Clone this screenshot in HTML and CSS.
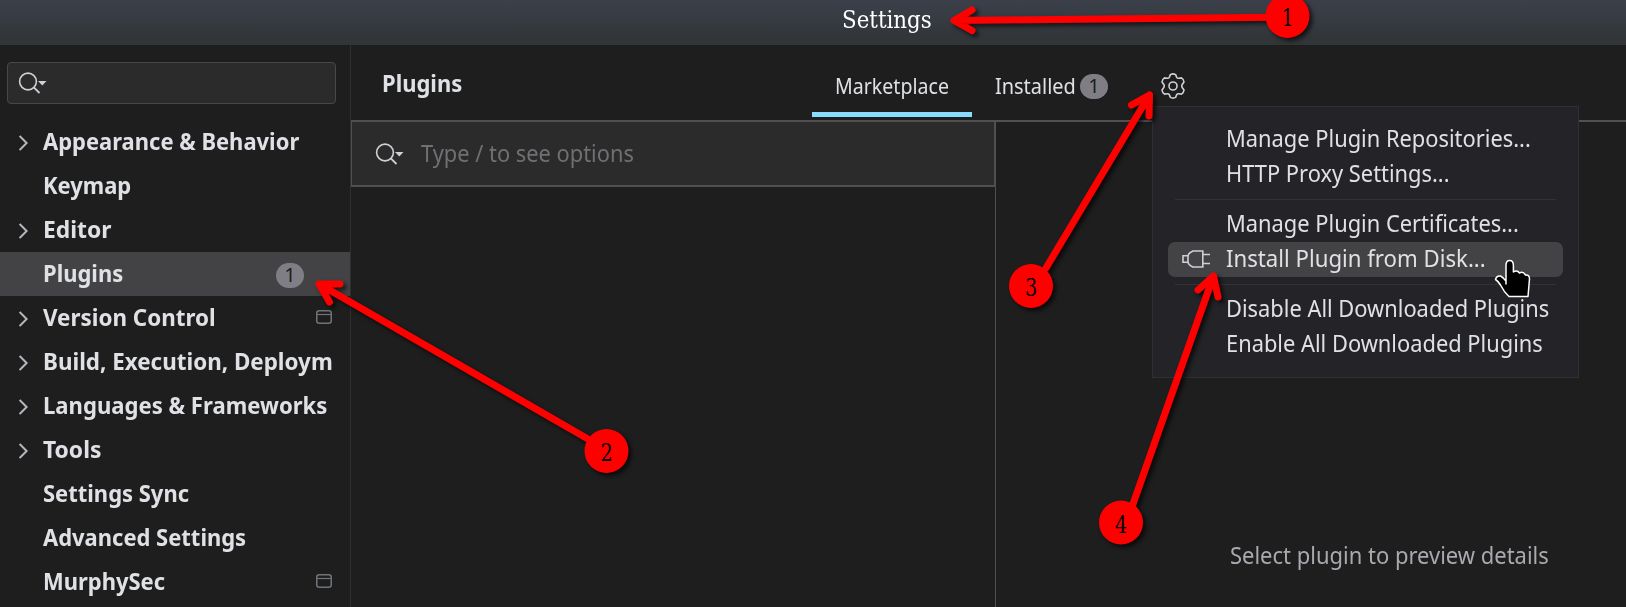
FILE: index.html
```
<!DOCTYPE html>
<html lang="en">
<head>
<meta charset="utf-8">
<title>Settings</title>
<link rel="stylesheet" href="styles.css">
</head>
<body>
<svg class="defs" width="0" height="0">
  <symbol id="search" viewBox="0 0 30 24"><circle cx="10" cy="10.5" r="8.4" fill="none" stroke="#ced0d6" stroke-width="1.6"/><path d="M15.8 16.3 21.5 22" fill="none" stroke="#ced0d6" stroke-width="1.8"/><path d="M20 10h8.5l-4.2 4.6z" fill="#ced0d6"/></symbol>
  <symbol id="chevron" viewBox="0 0 10 16"><path d="M.6 1l7 7-7 7" fill="none" stroke="#b4b8bf" stroke-width="2"/></symbol>
  <symbol id="project" viewBox="0 0 16 14"><rect x=".75" y=".75" width="14.5" height="12.5" rx="2.4" fill="none" stroke="#6f737a" stroke-width="1.5"/><path d="M1 4.5h14" stroke="#6f737a" stroke-width="1.2"/></symbol>
</svg>
<header class="titlebar"><span>Settings</span></header>
<div class="window">
  <aside class="sidebar">
    <div class="filter"><svg class="search-icon"><use href="#search"/></svg></div>
    <nav class="tree">
      <div class="node"><svg class="chevron"><use href="#chevron"/></svg><span class="label">Appearance &amp; Behavior</span></div>
      <div class="node"><span class="label">Keymap</span></div>
      <div class="node"><svg class="chevron"><use href="#chevron"/></svg><span class="label full">Editor</span></div>
      <div class="node selected"><span class="label">Plugins</span><span class="badge">1</span></div>
      <div class="node"><svg class="chevron"><use href="#chevron"/></svg><span class="label wide">Version Control</span><svg class="project"><use href="#project"/></svg></div>
      <div class="node"><svg class="chevron"><use href="#chevron"/></svg><span class="label wide">Build, Execution, Deploym</span></div>
      <div class="node"><svg class="chevron"><use href="#chevron"/></svg><span class="label medium">Languages &amp; Frameworks</span></div>
      <div class="node"><svg class="chevron"><use href="#chevron"/></svg><span class="label full">Tools</span></div>
      <div class="node"><span class="label">Settings Sync</span></div>
      <div class="node"><span class="label">Advanced Settings</span></div>
      <div class="node"><span class="label">MurphySec</span><svg class="project"><use href="#project"/></svg></div>
    </nav>
  </aside>
  <main class="content">
    <div class="toolbar">
      <h1 class="heading"><span>Plugins</span></h1>
      <div class="tab active"><span class="name">Marketplace</span></div>
      <div class="tab installed"><span class="name">Installed</span><span class="badge">1</span></div>
      <svg class="gear" viewBox="-12 -13 24 26"><path d="M-2.6 -11.4Q0 -12.8 2.6 -11.4L3.7 -8.6Q4.3 -7.6 5.5 -7.7L8.5 -8.1Q10.8 -6.6 11 -4L9.2 -1.5Q8.4 0 9.2 1.5L11 4Q10.8 6.6 8.5 8.1L5.5 7.7Q4.3 7.6 3.7 8.6L2.6 11.4Q0 12.8 -2.6 11.4L-3.7 8.6Q-4.3 7.6 -5.5 7.7L-8.5 8.1Q-10.8 6.6 -11 4L-9.2 1.5Q-8.4 0 -9.2 -1.5L-11 -4Q-10.8 -6.6 -8.5 -8.1L-5.5 -7.7Q-4.3 -7.6 -3.7 -8.6Z"/><circle r="4"/></svg>
    </div>
    <div class="panes">
      <section class="list"><div class="query"><svg class="search-icon"><use href="#search"/></svg><span class="placeholder">Type / to see options</span></div></section>
      <section class="details"><span class="hint">Select plugin to preview details</span></section>
    </div>
  </main>
</div>
<div class="menu">
  <div class="item"><span>Manage Plugin Repositories...</span></div>
  <div class="item"><span>HTTP Proxy Settings...</span></div>
  <div class="separator"></div>
  <div class="item"><span>Manage Plugin Certificates...</span></div>
  <div class="item hover"><svg class="plug" viewBox="0 0 28 18"><path d="M6 5.7H1v6.6h5M11 1h9.8v16H11Q6 15 6 11.5v-5Q6 3 11 1zM20.8 4.5H28M20.8 13.5H28"/></svg><span>Install Plugin from Disk...</span></div>
  <div class="separator"></div>
  <div class="item"><span>Disable All Downloaded Plugins</span></div>
  <div class="item"><span>Enable All Downloaded Plugins</span></div>
</div>
<svg class="annotations" viewBox="0 0 1626 607">
  <path class="pointer" d="M1506 284V265.500Q1506 260.500 1509.700 260.500T1513.400 265.500V272Q1517 269.500 1519.500 273Q1523 271 1525.500 275Q1529.500 274.500 1529.500 279L1528 296.500H1509Q1504 292 1500.500 285Q1498 281 1495.500 279.500Q1496.500 275.500 1500.500 276Q1503.500 277.500 1506 281z"/>
  <g class="callout"><path d="M1287 17.200 954 20.500M972 10 954 20.500 972 30.500"/><circle cx="1287.500" cy="16" r="22"/></g>
  <g class="callout"><path d="M588 439 319 284M340 284H319L329.500 302"/><circle cx="606.500" cy="451" r="22"/></g>
  <g class="callout"><path d="M1046 268 1149.500 95M1131.500 105 1149.500 95 1149 116"/><circle cx="1031" cy="286" r="22"/></g>
  <g class="callout"><path d="M1133 504 1213.500 276M1198 290 1213.500 276 1218 297"/><circle cx="1121" cy="522.500" r="22"/></g>
  <text transform="translate(1287.500 26) scale(.8 1)">1</text>
  <text transform="translate(606.500 461) scale(.8 1)">2</text>
  <text transform="translate(1031 296) scale(.8 1)">3</text>
  <text transform="translate(1121 533) scale(.8 1)">4</text>
</svg>
</body>
</html>
```
FILE: styles.css
```
* { box-sizing: border-box; }
body { margin: 0; width: 1626px; height: 607px; overflow: hidden; position: relative; background: #1e1e1e; color: #dfe1e5; font: 23px "Noto Sans", sans-serif; white-space: nowrap; }
.defs { position: absolute; }
.titlebar { height: 45px; padding: 0 0 6px 842px; display: flex; align-items: center; background: linear-gradient(#3a3f49, #383d45 30%, #323639 80%, #303538); color: #fff; font: 23.500px "DejaVu Serif", serif; }
.titlebar span { transform: scaleX(.91); transform-origin: left; }
.window { display: flex; height: 562px; }
.sidebar { width: 351px; flex: none; border-right: 1px solid #2f2f30; padding-top: 17px; }
.filter { width: 329px; height: 42px; margin-left: 6.500px; border: 1px solid #48484a; border-radius: 4px; background: #2b2b2b; padding: 8px 0 0 10px; }
.search-icon { width: 30px; height: 24px; display: block; flex: none; }
.tree { padding-top: 16px; }
.node { height: 44px; display: flex; align-items: center; padding: 0 18px 0 43px; position: relative; font-weight: 700; }
.label { line-height: 30px; margin: -3px auto 0 0; transform: scaleX(.955); transform-origin: left; }
.label.medium { transform: scaleX(.961); }
.label.wide { transform: scaleX(.974); }
.label.full { transform: scaleX(.993); }
.selected { background: #434345; }
.chevron { position: absolute; left: 19px; top: 15px; width: 10px; height: 16px; }
.project { width: 16px; height: 14px; margin-top: -2px; }
.badge { width: 28px; height: 25px; border-radius: 12.5px; background: #7f7e84; color: #1e1e1e; font-size: 20px; font-weight: 400; line-height: 24px; text-align: center; flex: none; }
.node .badge { margin: 3px 28px 0 0; }
.content { flex: 1; }
.toolbar { height: 75px; display: flex; padding-left: 31px; }
.heading { margin: 0; width: 430px; font-size: 23px; line-height: 30px; padding-top: 23px; }
.heading span { display: inline-block; transform: scaleX(.955); transform-origin: left; }
.tab { height: 72px; padding-top: 25px; line-height: 30px; display: flex; font-size: 22px; }
.name { transform: scaleX(.89); }
.active { width: 160px; justify-content: center; border-bottom: 5px solid #87dcff; }
.installed { margin-left: 23px; width: 113px; }
.installed .name { width: 85px; flex: none; transform: scaleX(.906); transform-origin: left; }
.installed .badge { margin-top: 4px; }
.gear { width: 24px; height: 26px; margin: 28px 0 0 53px; fill: none; stroke: #ced0d6; stroke-width: 1.6; }
.panes { display: flex; height: 487px; border-top: 2px solid #505050; }
.list { width: 645px; border-right: 1px solid #505050; }
.query { height: 65px; display: flex; align-items: center; background: #2b2b2b; border: solid #505050; border-width: 0 1px 2px 1px; padding-left: 23px; }
.placeholder { margin: -2px 0 0 16px; color: #6f7073; font-size: 23.500px; transform: scaleX(.929); transform-origin: left; }
.details { flex: 1; padding: 418px 0 0 234px; color: #a8aab0; line-height: 30px; font-size: 23.500px; }
.hint { display: inline-block; transform: scaleX(.935); transform-origin: left; }
.menu { position: absolute; left: 1152px; top: 106px; width: 427px; height: 272px; padding: 15px; border: 1px solid #303032; background: #242328; font-size: 23.500px; }
.item { height: 35px; padding-left: 58px; line-height: 32px; border-radius: 7px; position: relative; }
.item span { display: inline-block; transform: scaleX(.93); transform-origin: left; }
.item.hover span { transform: scaleX(.944); }
.hover { background: #434345; }
.plug { position: absolute; left: 14px; top: 8px; width: 28px; height: 18px; fill: none; stroke: #ced0d6; stroke-width: 1.6; }
.separator { height: 15px; margin: 0 7px; background: linear-gradient(#323235, #323235) 0 7px / 100% 1px no-repeat; }
.annotations { position: absolute; left: 0; top: 0; width: 1626px; height: 607px; }
.callout { filter: drop-shadow(3px 3px 2px rgba(0,0,0,.65)); }
.callout path { fill: none; stroke: #f00; stroke-width: 7; stroke-linecap: round; stroke-linejoin: round; }
.callout circle { fill: #f00; }
.annotations text { font: 24px "DejaVu Serif", serif; text-anchor: middle; fill: #000; }
.pointer { fill: #000; stroke: #fff; stroke-width: 1.5; stroke-linejoin: round; }
```
